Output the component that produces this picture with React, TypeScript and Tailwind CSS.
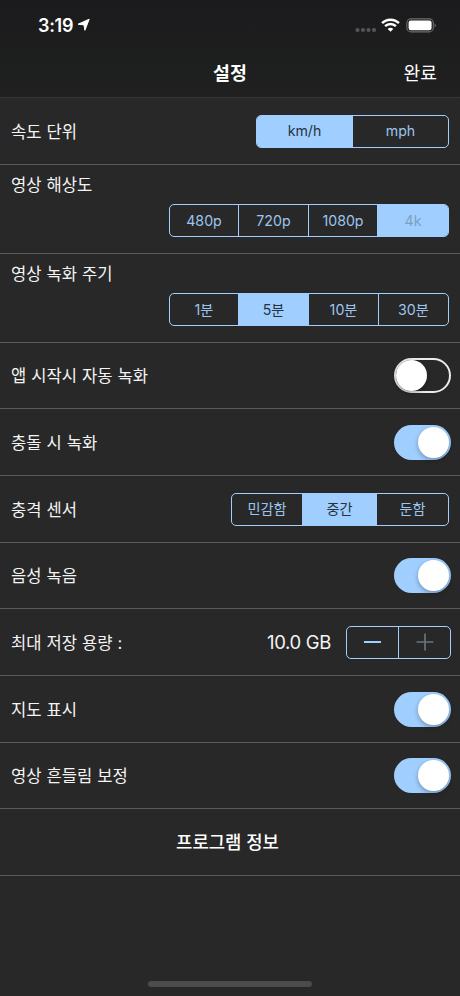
import React, { useState } from 'react';
import clsx from 'clsx';

interface SegmentItem {
  label: string;
  width: string;
  disabled?: boolean;
}

const speedUnits: SegmentItem[] = [
  { label: 'km/h', width: 'w-[95px]' },
  { label: 'mph', width: 'w-[96px]' }
];

const resolutions: SegmentItem[] = [
  { label: '480p', width: 'w-[68px]' },
  { label: '720p', width: 'w-[70px]' },
  { label: '1080p', width: 'w-[69px]' },
  { label: '4k', width: 'w-[71px]', disabled: true }
];

const intervals: SegmentItem[] = [
  { label: '1분', width: 'w-[68px]' },
  { label: '5분', width: 'w-[70px]' },
  { label: '10분', width: 'w-[70px]' },
  { label: '30분', width: 'w-[70px]' }
];

const sensorLevels: SegmentItem[] = [
  { label: '민감함', width: 'w-[70px]' },
  { label: '중간', width: 'w-[74px]' },
  { label: '둔함', width: 'w-[72px]' }
];

const Segmented: React.FC<{ items: SegmentItem[]; initial: number }> = ({ items, initial }) => {
  const [selected, setSelected] = useState(initial);

  return (
    <div className="flex h-[33px] overflow-hidden rounded-[5px] border border-[#a0cfff] text-[14.2px] text-[#9cc5ed]">
      {items.map((item, index) => (
        <button
          key={item.label}
          disabled={item.disabled}
          onClick={() => setSelected(index)}
          className={clsx(
            'flex items-center justify-center',
            item.width,
            index > 0 && 'border-l border-[#a0cfff]',
            selected === index && 'bg-[#a0cfff]',
            selected === index && !item.disabled && 'text-[#26333f]',
            item.disabled && 'text-[#7e9fc0]'
          )}
        >
          {item.label}
        </button>
      ))}
    </div>
  );
};

const Toggle: React.FC<{ initial: boolean }> = ({ initial }) => {
  const [on, setOn] = useState(initial);

  return (
    <button
      role="switch"
      aria-checked={on}
      onClick={() => setOn(!on)}
      className={clsx(
        'flex h-[35px] w-[57px] items-center rounded-full',
        on ? 'justify-end bg-[#a0cfff] pr-[2px]' : 'justify-start border-2 border-[#eeeaea]'
      )}
    >
      <span className="h-[31px] w-[31px] rounded-full bg-white shadow-[0_2px_5px_rgba(0,0,0,0.3)]" />
    </button>
  );
};

const Row: React.FC<{ label: string; height: string; children: React.ReactNode }> = ({ label, height, children }) => (
  <div className={clsx('flex items-center justify-between border-b border-[#5a5a5a] pl-[11px]', height)}>
    <span className="whitespace-pre pt-[2px]">{label}</span>
    {children}
  </div>
);

const StatusBar: React.FC = () => (
  <div className="flex h-[50px] items-center justify-between pl-[38px] pr-[23px]">
    <div className="flex items-center gap-[4px]">
      <span className="pt-px text-[18px] font-semibold tracking-[-0.3px]">3:19</span>
      <svg width="14" height="14" viewBox="0 0 14 14" fill="white">
        <path d="M12.2 1.2 7.9 12.3 7 6.9 1.1 6.2Z" stroke="white" strokeWidth="1" strokeLinejoin="round" />
      </svg>
    </div>
    <div className="flex items-center">
      <svg width="22" height="6" viewBox="0 0 22 6" fill="#555555" className="mr-[4px] mt-[9px]">
        <circle cx="2.5" cy="3" r="2.1" />
        <circle cx="8" cy="3" r="2.1" />
        <circle cx="13.5" cy="3" r="2.1" />
        <circle cx="19" cy="3" r="2.1" />
      </svg>
      <svg width="19" height="14" viewBox="0 0 19 14" fill="none" stroke="white" strokeWidth="2.5">
        <path d="M1.1 5.1a11.9 11.9 0 0 1 16.8 0" />
        <path d="M4.1 8.2a7.6 7.6 0 0 1 10.8 0" />
        <path d="M9.5 13.8 6.7 11a3.9 3.9 0 0 1 5.6 0Z" fill="white" stroke="none" />
      </svg>
      <svg width="31" height="15" viewBox="0 0 31 15" className="ml-[6px]">
        <rect x="0.9" y="0.9" width="26.4" height="13" rx="4" fill="none" stroke="#6d6d6d" strokeWidth="1.1" />
        <rect x="2.6" y="2.6" width="23" height="9.6" rx="2.2" fill="white" />
        <path d="M28.6 5.2a2.6 2.6 0 0 1 0 4.4Z" fill="#6d6d6d" />
      </svg>
    </div>
  </div>
);

const App: React.FC = () => {
  return (
    <div className="flex h-[996px] w-[460px] flex-col bg-[#282828] font-[Inter,'Noto_Sans_CJK_KR',sans-serif] text-[16.6px] text-[#f4f4f4] [word-spacing:0.3px]">
      {/* Navigation bar */}
      <header className="h-[98px] border-b border-[#353535] bg-linear-to-b from-[#1b1b1d] to-[#1f201f] text-white">
        <StatusBar />
        <div className="grid h-[46px] grid-cols-3 items-center pt-[2px]">
          <span />
          <h1 className="text-center text-[18.4px] font-bold">설정</h1>
          <button className="pr-[23px] text-right text-[18.2px]">완료</button>
        </div>
      </header>

      <Row label="속도 단위" height="h-[67px]">
        <div className="mr-[11px]">
          <Segmented items={speedUnits} initial={0} />
        </div>
      </Row>

      {/* Stacked rows, label above the control */}
      <div className="flex h-[89px] flex-col justify-between border-b border-[#5a5a5a] pb-[16px] pl-[11px] pr-[11px] pt-[8px]">
        <span>영상 해상도</span>
        <div className="self-end">
          <Segmented items={resolutions} initial={3} />
        </div>
      </div>
      <div className="flex h-[89px] flex-col justify-between border-b border-[#5a5a5a] pb-[16px] pl-[11px] pr-[11px] pt-[8px]">
        <span>영상 녹화 주기</span>
        <div className="self-end">
          <Segmented items={intervals} initial={1} />
        </div>
      </div>

      <Row label="앱 시작시 자동 녹화" height="h-[66px]">
        <div className="mr-[9px]">
          <Toggle initial={false} />
        </div>
      </Row>
      <Row label="충돌 시 녹화" height="h-[67px]">
        <div className="mr-[9px]">
          <Toggle initial />
        </div>
      </Row>
      <Row label="충격 센서" height="h-[67px]">
        <div className="mr-[11px]">
          <Segmented items={sensorLevels} initial={1} />
        </div>
      </Row>
      <Row label="음성 녹음" height="h-[66px]">
        <div className="mr-[9px]">
          <Toggle initial />
        </div>
      </Row>
      <Row label="최대 저장 용량 :" height="h-[67px]">
        <div className="mr-[9px] flex items-center">
          <span className="mr-[15px] pt-[2px] text-[18.5px] tracking-[-0.35px] [word-spacing:0px]">10.0 GB</span>
          <div className="flex h-[33px] w-[105px] rounded-[5px] border border-[#a0cfff]">
            <button aria-label="감소" className="flex flex-1 items-center justify-center">
              <span className="h-[2px] w-[17px] bg-[#a0cfff]" />
            </button>
            <button aria-label="증가" className="flex flex-1 items-center justify-center border-l border-[#a0cfff]">
              <svg width="18" height="18" viewBox="0 0 18 18" stroke="#66747f" strokeWidth="1.7">
                <path d="M0.5 9h17M9 0.5v17" />
              </svg>
            </button>
          </div>
        </div>
      </Row>
      <Row label="지도 표시" height="h-[67px]">
        <div className="mr-[9px]">
          <Toggle initial />
        </div>
      </Row>
      <Row label="영상 흔들림 보정" height="h-[66px]">
        <div className="mr-[9px]">
          <Toggle initial />
        </div>
      </Row>

      <button className="h-[67px] border-b border-[#5a5a5a] pr-[5px] pt-[2px] text-center text-[17.8px] font-medium text-white">
        프로그램 정보
      </button>

      {/* Home indicator */}
      <div className="mb-[9px] mt-auto h-[6px] w-[164px] self-center rounded-full bg-[#4b4b4b]" />
    </div>
  );
};

export default App;
